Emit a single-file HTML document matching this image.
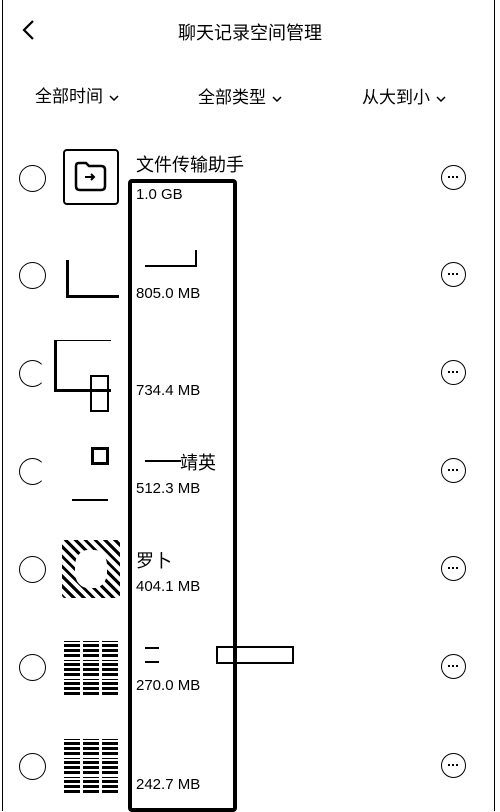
<html><head><style>
body{margin:0;width:500px;height:811px;background:#fff;position:relative;overflow:hidden;font-family:"Liberation Sans","Noto Sans CJK SC",sans-serif;color:#000}
.a{position:absolute}
.c{position:absolute;left:19px;width:25px;height:25px;border:1.5px solid #000;border-radius:50%}
.m{position:absolute;left:441px;width:23px;height:23px;border:1.5px solid #000;border-radius:50%}
.m::after{content:"";position:absolute;left:6px;top:10px;width:2px;height:2px;background:#000;box-shadow:4px 0 #000,8px 0 #000}
.s{position:absolute;left:136px;font-size:15px}
.n{position:absolute;left:136px;font-size:18px}
.g{position:absolute;left:64px;width:54px;height:54px;display:grid;grid-template-columns:repeat(3,16px);gap:3px}
.g i{background:repeating-linear-gradient(0deg,#000 0 3px,#fff 3px 5px);display:block}
.v{display:inline-block;vertical-align:middle;margin-left:6px}
</style></head><body>
<div class="a" style="left:2px;top:0;width:1px;height:811px;background:#000"></div>
<div class="a" style="left:494px;top:0;width:1px;height:811px;background:#000"></div>
<svg class="a" style="left:20px;top:18px" width="16" height="24"><path d="M13 3 L4 12 L13 21" stroke="#000" stroke-width="2.2" fill="none"/></svg>
<div class="a" style="left:0;width:500px;top:19px;text-align:center;font-size:18px">聊天记录空间管理</div>
<div class="a" style="left:35px;top:82px;font-size:17px">全部时间<svg class="v" width="10" height="6"><path d="M1 1 L5 5 L9 1" stroke="#000" stroke-width="1.5" fill="none"/></svg></div>
<div class="a" style="left:198px;top:83px;font-size:17px">全部类型<svg class="v" width="10" height="6"><path d="M1 1 L5 5 L9 1" stroke="#000" stroke-width="1.5" fill="none"/></svg></div>
<div class="a" style="left:362px;top:83px;font-size:17px">从大到小<svg class="v" width="10" height="6"><path d="M1 1 L5 5 L9 1" stroke="#000" stroke-width="1.5" fill="none"/></svg></div>

<div class="c" style="top:165px"></div>
<div class="a" style="left:63px;top:149px;width:52px;height:52px;border:2.5px solid #000;border-radius:4px"></div>
<svg class="a" style="left:73px;top:160px" width="36" height="34"><path d="M3 6 Q3 3 6 3 H13 L16 6 H28 Q32 6 32 10 V26 Q32 30 28 30 H7 Q3 30 3 26 Z" stroke="#000" stroke-width="2.5" fill="none"/><path d="M12 17 H21 M18 14 L21 17 L18 20" stroke="#000" stroke-width="2" fill="none"/></svg>
<div class="n" style="top:151px">文件传输助手</div>
<div class="s" style="top:186px">1.0 GB</div>
<div class="m" style="top:165px"></div>

<div class="c" style="top:262px"></div>
<div class="a" style="left:66px;top:260px;width:50px;height:35px;border-left:3px solid #000;border-bottom:3px solid #000"></div>
<div class="a" style="left:145px;top:250px;width:50px;height:15px;border-right:2px solid #000;border-bottom:2px solid #000"></div>
<div class="s" style="top:285px">805.0 MB</div>
<div class="m" style="top:262px"></div>

<div class="c" style="top:360px;border-right-color:#fff"></div>
<div class="a" style="left:54px;top:340px;width:54px;height:48px;border-left:3px solid #000;border-bottom:3px solid #000;border-top:1px solid #000"></div>
<div class="a" style="left:90px;top:375px;width:15px;height:33px;border:2px solid #000"></div>
<div class="s" style="top:382px">734.4 MB</div>
<div class="m" style="top:360px"></div>

<div class="c" style="top:458px;border-right-color:#fff"></div>
<div class="a" style="left:91px;top:447px;width:12px;height:12px;border:3px solid #000"></div>
<div class="a" style="left:72px;top:499px;width:36px;height:2px;background:#000"></div>
<div class="a" style="left:145px;top:460px;width:36px;height:2px;background:#000"></div>
<div class="n" style="top:449px;left:180px">靖英</div>
<div class="s" style="top:480px">512.3 MB</div>
<div class="m" style="top:458px"></div>

<div class="c" style="top:556px"></div>
<div class="a" style="left:62px;top:540px;width:58px;height:58px;background:repeating-linear-gradient(45deg,#000 0 3px,#fff 3px 7px);border-radius:3px"></div>
<div class="a" style="left:75px;top:550px;width:32px;height:38px;background:#fff;border-radius:40%"></div>
<div class="n" style="top:547px">罗卜</div>
<div class="s" style="top:578px">404.1 MB</div>
<div class="m" style="top:556px"></div>

<div class="c" style="top:654px"></div>
<div class="g" style="top:641px"><i></i><i></i><i></i><i></i><i></i><i></i><i></i><i></i><i></i></div>
<div class="a" style="left:145px;top:647px;width:14px;height:12px;border-top:2px solid #000;border-bottom:2px solid #000"></div>
<div class="a" style="left:216px;top:646px;width:74px;height:14px;border:2px solid #000"></div>
<div class="s" style="top:677px">270.0 MB</div>
<div class="m" style="top:654px"></div>

<div class="c" style="top:753px"></div>
<div class="g" style="top:739px"><i></i><i></i><i></i><i></i><i></i><i></i><i></i><i></i><i></i></div>
<div class="s" style="top:776px">242.7 MB</div>
<div class="m" style="top:753px"></div>

<div class="a" style="left:128px;top:179px;width:101px;height:625px;border:4px solid #000;border-radius:4px"></div>
</body></html>
